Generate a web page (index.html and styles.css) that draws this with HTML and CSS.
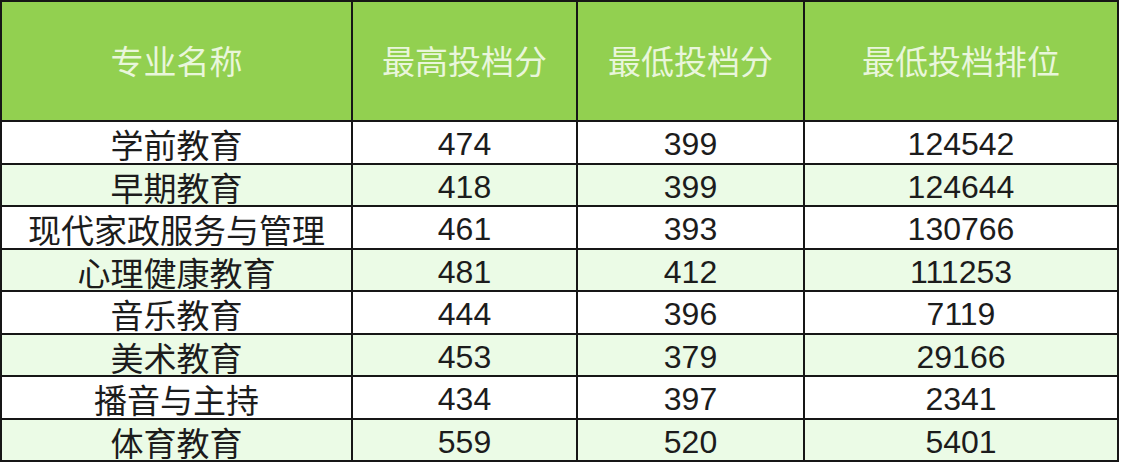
FILE: index.html
```html
<!DOCTYPE html>
<html lang="zh-CN">
<head>
<meta charset="utf-8">
<title>专业投档分</title>
<link rel="stylesheet" href="styles.css">
</head>
<body>
<div class="sheet">
  <div class="hd">专业名称</div>
  <div class="hd">最高投档分</div>
  <div class="hd">最低投档分</div>
  <div class="hd">最低投档排位</div>

  <div class="c zh">学前教育</div><div class="c num">474</div><div class="c num">399</div><div class="c num">124542</div>
  <div class="c zh alt">早期教育</div><div class="c num alt">418</div><div class="c num alt">399</div><div class="c num alt">124644</div>
  <div class="c zh">现代家政服务与管理</div><div class="c num">461</div><div class="c num">393</div><div class="c num">130766</div>
  <div class="c zh alt">心理健康教育</div><div class="c num alt">481</div><div class="c num alt">412</div><div class="c num alt">111253</div>
  <div class="c zh">音乐教育</div><div class="c num">444</div><div class="c num">396</div><div class="c num">7119</div>
  <div class="c zh alt">美术教育</div><div class="c num alt">453</div><div class="c num alt">379</div><div class="c num alt">29166</div>
  <div class="c zh">播音与主持</div><div class="c num">434</div><div class="c num">397</div><div class="c num">2341</div>
  <div class="c zh alt">体育教育</div><div class="c num alt">559</div><div class="c num alt">520</div><div class="c num alt">5401</div>
</div>
</body>
</html>
```
FILE: styles.css
```css
html, body {
  margin: 0;
  padding: 0;
  background: #ffffff;
}
.sheet {
  width: 1119px;
  height: 462px;
  box-sizing: border-box;
  padding: 2px;
  background: #161616;
  display: grid;
  grid-template-columns: 349px 223px 225px 312px;
  grid-template-rows: 118px repeat(8, 40.5px);
  gap: 2px;
}
.hd {
  background: #92d050;
  color: #e9f6db;
  font-family: "Noto Sans CJK SC", sans-serif;
  font-size: 33px;
  display: flex;
  align-items: center;
  justify-content: center;
  line-height: 1;
  padding-bottom: 2px;
}
.c {
  background: #ffffff;
  color: #1c1c1c;
  display: flex;
  align-items: center;
  justify-content: center;
  line-height: 34px;
  padding-top: 4px;
  box-sizing: border-box;
  white-space: nowrap;
}
.c.alt {
  background: #ebfbe6;
}
.zh {
  font-family: "Noto Sans CJK SC", sans-serif;
  font-size: 33px;
}
.num {
  font-family: "Liberation Sans", Arial, sans-serif;
  font-size: 32px;
}
```
